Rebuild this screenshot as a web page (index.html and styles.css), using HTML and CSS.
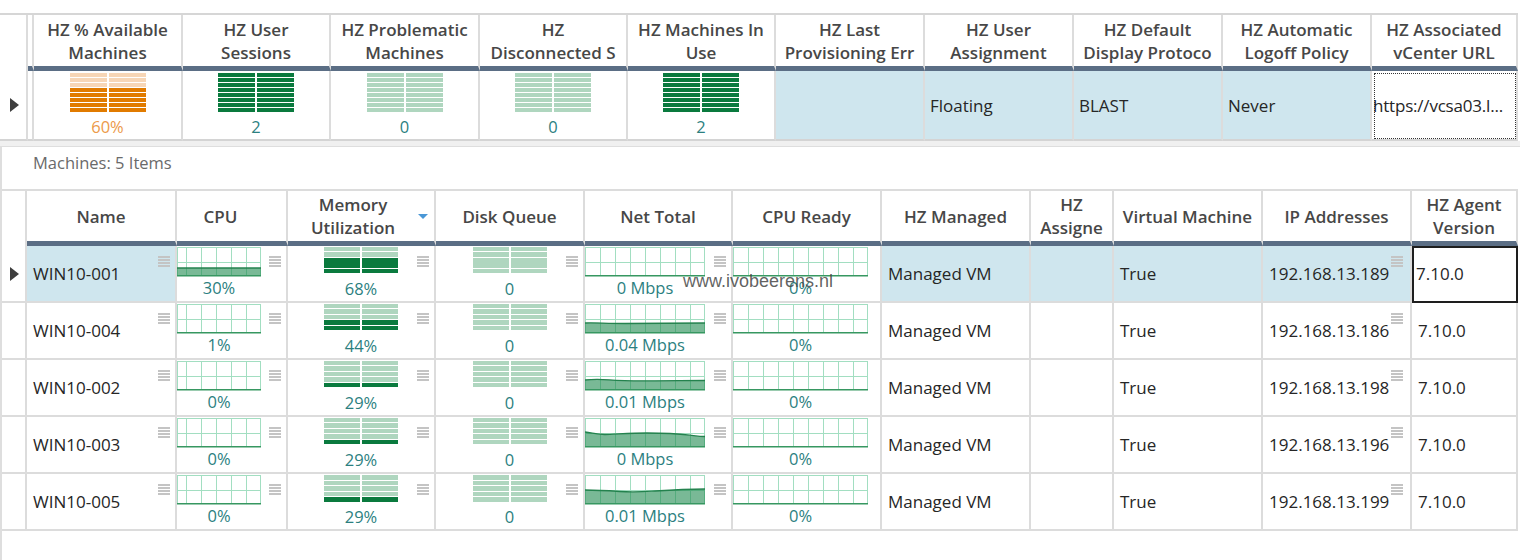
FILE: index.html
```html
<!DOCTYPE html>
<html>
<head>
<meta charset="utf-8">
<title>Horizon pool</title>
<link rel="stylesheet" href="styles.css">
</head>
<body>
<svg class="defs" width="0" height="0" aria-hidden="true">
  <symbol id="gcpu" viewBox="0 0 84 30"><path d="M0 .5H84M0 15.5H84M.5 0V28M9.5 0V28M24.5 0V28M39.5 0V28M54.5 0V28M69.5 0V28M83.5 0V28" stroke="#a2dec1" fill="none"/><path d="M0 28.75H84" stroke="#379761" stroke-width="1.5"/></symbol>
  <symbol id="gnet" viewBox="0 0 120 30"><path d="M0 .5H120M0 15.5H120M.5 0V28M15.5 0V28M30.5 0V28M45.5 0V28M60.5 0V28M75.5 0V28M90.5 0V28M105.5 0V28M119.5 0V28" stroke="#a2dec1" fill="none"/><path d="M0 28.75H120" stroke="#379761" stroke-width="1.5"/></symbol>
  <symbol id="grdy" viewBox="0 0 135 30"><path d="M0 .5H135M0 15.5H135M.5 0V28M15.5 0V28M30.5 0V28M45.5 0V28M60.5 0V28M75.5 0V28M90.5 0V28M105.5 0V28M120.5 0V28M134.5 0V28" stroke="#a2dec1" fill="none"/><path d="M0 28.75H135" stroke="#379761" stroke-width="1.5"/></symbol>
  <symbol id="hdl" viewBox="0 0 12 11"><path d="M0 1H12M0 4H12M0 7H12M0 10H12" stroke="#c4c4c4" stroke-width="2"/></symbol>
  <symbol id="tri" viewBox="0 0 9 14"><path d="M0 0L9 7L0 14Z" fill="#3e3e3e"/></symbol>
</svg>

<div class="page">
  <div class="pool">
    <div class="h rh"></div>
    <div class="h sp"></div>
    <div class="h">HZ % Available<br>Machines</div>
    <div class="h">HZ User<br>Sessions</div>
    <div class="h">HZ Problematic<br>Machines</div>
    <div class="h">HZ<br>Disconnected S</div>
    <div class="h">HZ Machines In<br>Use</div>
    <div class="h">HZ Last<br>Provisioning Err</div>
    <div class="h">HZ User<br>Assignment</div>
    <div class="h">HZ Default<br>Display Protoco</div>
    <div class="h">HZ Automatic<br>Logoff Policy</div>
    <div class="h">HZ Associated<br>vCenter URL</div>

    <div class="d rh"><svg class="tri"><use href="#tri"/></svg></div>
    <div class="d sp"></div>
    <div class="d stat"><div class="bar8 orange" style="--off:15px"></div><div class="val or">60%</div></div>
    <div class="d stat"><div class="bar8 green" style="--off:0px"></div><div class="val">2</div></div>
    <div class="d stat"><div class="bar8 green" style="--off:40px"></div><div class="val">0</div></div>
    <div class="d stat"><div class="bar8 green" style="--off:40px"></div><div class="val">0</div></div>
    <div class="d stat"><div class="bar8 green" style="--off:0px"></div><div class="val">2</div></div>
    <div class="d txt sel"></div>
    <div class="d txt sel">Floating</div>
    <div class="d txt sel">BLAST</div>
    <div class="d txt sel">Never</div>
    <div class="d txt url">https://vcsa03.l...</div>
  </div>

  <div class="band"></div>

  <div class="panel">
    <div class="label">Machines: 5 Items</div>
    <div class="machines">
      <div class="h rh"></div>
      <div class="h">Name</div>
      <div class="h cpuh">CPU</div>
      <div class="h sorted"><span class="ht">Memory<br>Utilization</span><svg class="sort" width="10" height="5" viewBox="0 0 10 5"><path d="M0 0H10L5 5Z" fill="#4a97d6"/></svg></div>
      <div class="h">Disk Queue</div>
      <div class="h">Net Total</div>
      <div class="h">CPU Ready</div>
      <div class="h">HZ Managed</div>
      <div class="h">HZ<br>Assigne</div>
      <div class="h">Virtual Machine</div>
      <div class="h">IP Addresses</div>
      <div class="h">HZ Agent<br>Version</div>

      <!-- row 1 -->
      <div class="r rh"><svg class="tri"><use href="#tri"/></svg></div>
      <div class="r txt sel"><span>WIN10-001</span><svg class="hdl"><use href="#hdl"/></svg></div>
      <div class="r chartcell"><div class="chart"><svg class="spark" width="84" height="30"><use href="#gcpu" width="84" height="30"/><path d="M0 28V21H84V28Z" class="fill"/><path d="M0 21H84" class="edge"/></svg><div class="val">30%</div></div><svg class="hdl"><use href="#hdl"/></svg></div>
      <div class="r barcell"><div class="bb"><div class="bar5" style="--off:11px"></div><div class="val">68%</div></div><svg class="hdl"><use href="#hdl"/></svg></div>
      <div class="r barcell"><div class="bb"><div class="bar5" style="--off:28px"></div><div class="val">0</div></div><svg class="hdl"><use href="#hdl"/></svg></div>
      <div class="r chartcell"><div class="chart"><svg class="spark" width="120" height="30"><use href="#gnet" width="120" height="30"/></svg><div class="val">0 Mbps</div></div><svg class="hdl"><use href="#hdl"/></svg></div>
      <div class="r chartcell"><div class="chart"><svg class="spark" width="135" height="30"><use href="#grdy" width="135" height="30"/></svg><div class="val">0%</div></div></div>
      <div class="r txt sel">Managed VM</div>
      <div class="r txt sel"></div>
      <div class="r txt sel">True</div>
      <div class="r txt sel ip"><span>192.168.13.189</span><svg class="hdl"><use href="#hdl"/></svg></div>
      <div class="r txt focus">7.10.0</div>

      <!-- row 2 -->
      <div class="r rh"></div>
      <div class="r txt"><span>WIN10-004</span><svg class="hdl"><use href="#hdl"/></svg></div>
      <div class="r chartcell"><div class="chart"><svg class="spark" width="84" height="30"><use href="#gcpu" width="84" height="30"/></svg><div class="val">1%</div></div><svg class="hdl"><use href="#hdl"/></svg></div>
      <div class="r barcell"><div class="bb"><div class="bar5" style="--off:16.5px"></div><div class="val">44%</div></div><svg class="hdl"><use href="#hdl"/></svg></div>
      <div class="r barcell"><div class="bb"><div class="bar5" style="--off:28px"></div><div class="val">0</div></div><svg class="hdl"><use href="#hdl"/></svg></div>
      <div class="r chartcell"><div class="chart"><svg class="spark" width="120" height="30"><use href="#gnet" width="120" height="30"/><path d="M0 28V19C10 18.5 20 19.5 40 19.5S80 19 120 19V28Z" class="fill"/><path d="M0 19C10 18.5 20 19.5 40 19.5S80 19 120 19" class="edge"/></svg><div class="val">0.04 Mbps</div></div><svg class="hdl"><use href="#hdl"/></svg></div>
      <div class="r chartcell"><div class="chart"><svg class="spark" width="135" height="30"><use href="#grdy" width="135" height="30"/></svg><div class="val">0%</div></div></div>
      <div class="r txt">Managed VM</div>
      <div class="r txt"></div>
      <div class="r txt">True</div>
      <div class="r txt ip"><span>192.168.13.186</span><svg class="hdl"><use href="#hdl"/></svg></div>
      <div class="r txt">7.10.0</div>

      <!-- row 3 -->
      <div class="r rh"></div>
      <div class="r txt"><span>WIN10-002</span><svg class="hdl"><use href="#hdl"/></svg></div>
      <div class="r chartcell"><div class="chart"><svg class="spark" width="84" height="30"><use href="#gcpu" width="84" height="30"/></svg><div class="val">0%</div></div><svg class="hdl"><use href="#hdl"/></svg></div>
      <div class="r barcell"><div class="bb"><div class="bar5" style="--off:22px"></div><div class="val">29%</div></div><svg class="hdl"><use href="#hdl"/></svg></div>
      <div class="r barcell"><div class="bb"><div class="bar5" style="--off:28px"></div><div class="val">0</div></div><svg class="hdl"><use href="#hdl"/></svg></div>
      <div class="r chartcell"><div class="chart"><svg class="spark" width="120" height="30"><use href="#gnet" width="120" height="30"/><path d="M0 28V19C8 18 14 18 24 18.8S50 20 70 19.8S100 19.5 120 19.5V28Z" class="fill"/><path d="M0 19C8 18 14 18 24 18.8S50 20 70 19.8S100 19.5 120 19.5" class="edge"/></svg><div class="val">0.01 Mbps</div></div><svg class="hdl"><use href="#hdl"/></svg></div>
      <div class="r chartcell"><div class="chart"><svg class="spark" width="135" height="30"><use href="#grdy" width="135" height="30"/></svg><div class="val">0%</div></div></div>
      <div class="r txt">Managed VM</div>
      <div class="r txt"></div>
      <div class="r txt">True</div>
      <div class="r txt ip"><span>192.168.13.198</span><svg class="hdl"><use href="#hdl"/></svg></div>
      <div class="r txt">7.10.0</div>

      <!-- row 4 -->
      <div class="r rh"></div>
      <div class="r txt"><span>WIN10-003</span><svg class="hdl"><use href="#hdl"/></svg></div>
      <div class="r chartcell"><div class="chart"><svg class="spark" width="84" height="30"><use href="#gcpu" width="84" height="30"/></svg><div class="val">0%</div></div><svg class="hdl"><use href="#hdl"/></svg></div>
      <div class="r barcell"><div class="bb"><div class="bar5" style="--off:22px"></div><div class="val">29%</div></div><svg class="hdl"><use href="#hdl"/></svg></div>
      <div class="r barcell"><div class="bb"><div class="bar5" style="--off:28px"></div><div class="val">0</div></div><svg class="hdl"><use href="#hdl"/></svg></div>
      <div class="r chartcell"><div class="chart"><svg class="spark" width="120" height="30"><use href="#gnet" width="120" height="30"/><path d="M0 28V14C8 15 12 16.5 20 16.5S45 15 62 15S95 16 105 17.2S115 18.5 120 18.5V28Z" class="fill"/><path d="M0 14C8 15 12 16.5 20 16.5S45 15 62 15S95 16 105 17.2S115 18.5 120 18.5" class="edge"/></svg><div class="val">0 Mbps</div></div><svg class="hdl"><use href="#hdl"/></svg></div>
      <div class="r chartcell"><div class="chart"><svg class="spark" width="135" height="30"><use href="#grdy" width="135" height="30"/></svg><div class="val">0%</div></div></div>
      <div class="r txt">Managed VM</div>
      <div class="r txt"></div>
      <div class="r txt">True</div>
      <div class="r txt ip"><span>192.168.13.196</span><svg class="hdl"><use href="#hdl"/></svg></div>
      <div class="r txt">7.10.0</div>

      <!-- row 5 -->
      <div class="r rh"></div>
      <div class="r txt"><span>WIN10-005</span><svg class="hdl"><use href="#hdl"/></svg></div>
      <div class="r chartcell"><div class="chart"><svg class="spark" width="84" height="30"><use href="#gcpu" width="84" height="30"/></svg><div class="val">0%</div></div><svg class="hdl"><use href="#hdl"/></svg></div>
      <div class="r barcell"><div class="bb"><div class="bar5" style="--off:22px"></div><div class="val">29%</div></div><svg class="hdl"><use href="#hdl"/></svg></div>
      <div class="r barcell"><div class="bb"><div class="bar5" style="--off:28px"></div><div class="val">0</div></div><svg class="hdl"><use href="#hdl"/></svg></div>
      <div class="r chartcell"><div class="chart"><svg class="spark" width="120" height="30"><use href="#gnet" width="120" height="30"/><path d="M0 28V15C10 15 20 15.5 35 16.5S55 17 70 16S100 14 120 14V28Z" class="fill"/><path d="M0 15C10 15 20 15.5 35 16.5S55 17 70 16S100 14 120 14" class="edge"/></svg><div class="val">0.01 Mbps</div></div><svg class="hdl"><use href="#hdl"/></svg></div>
      <div class="r chartcell"><div class="chart"><svg class="spark" width="135" height="30"><use href="#grdy" width="135" height="30"/></svg><div class="val">0%</div></div></div>
      <div class="r txt">Managed VM</div>
      <div class="r txt"></div>
      <div class="r txt">True</div>
      <div class="r txt ip"><span>192.168.13.199</span><svg class="hdl"><use href="#hdl"/></svg></div>
      <div class="r txt">7.10.0</div>
    </div>
  </div>
</div>

<div class="watermark">www.ivobeerens.nl</div>
</body>
</html>
```

FILE: styles.css
```css
* { box-sizing: border-box; }
html, body { margin: 0; padding: 0; background: #fff; }
body {
  width: 1520px;
  height: 560px;
  overflow: hidden;
  position: relative;
  font-family: "Open Sans", "Noto Sans", sans-serif;
  color: #262626;
}
.defs { position: absolute; width: 0; height: 0; overflow: hidden; }

.page { padding-top: 13px; }

/* ---------- top pool grid ---------- */
.pool {
  display: grid;
  grid-template-columns: 28px 6px 149px 148px 149px 148px 148px 149px 149px 149px 149px 146px;
  width: 1518px;
  border-top: 2px solid #d6d6d6;
}

.h {
  height: 56px;
  border-right: 2px solid #dcdcdc;
  border-bottom: 5px solid #5b6e85;
  display: flex;
  align-items: center;
  justify-content: center;
  text-align: center;
  font-weight: 600;
  font-size: 17px;
  line-height: 23px;
  color: #474747;
  white-space: nowrap;
  overflow: hidden;
}
.h.rh { border-bottom: 0; }

.d {
  height: 70px;
  border-right: 2px solid #dcdcdc;
  border-bottom: 2px solid #d4d4d4;
}
.rh { display: flex; align-items: center; justify-content: center; }
.tri { width: 9px; height: 14px; display: block; margin-left: 2px; }

.stat {
  display: flex;
  flex-direction: column;
  align-items: center;
  padding-top: 2px;
}
.bar8 {
  width: 76px;
  height: 39px;
  background:
    linear-gradient(to right, transparent 37px, #fff 37px 39px, transparent 39px),
    repeating-linear-gradient(to bottom, transparent 0 4px, #fff 4px 5px),
    linear-gradient(to bottom, var(--lt) 0 var(--off), var(--dk) var(--off) 100%);
}
.bar8.orange { --lt: #f7d6b6; --dk: #e17b00; }
.bar8.green { --lt: #afd6bf; --dk: #0a7a3e; }

.val {
  font-size: 16.5px;
  line-height: 22px;
  color: #2c7f7f;
  text-align: center;
  white-space: nowrap;
}
.stat .val { margin-top: 4px; }
.val.or { color: #ec9a4a; }

.txt {
  display: flex;
  align-items: center;
  padding-left: 5px;
  font-size: 17px;
  white-space: nowrap;
  overflow: hidden;
}
.sel { background: #cfe6ee; }
.url {
  padding-left: 1px;
  outline: 1px dotted #333;
  outline-offset: -3px;
  letter-spacing: -0.2px;
}

/* ---------- between ---------- */
.band { height: 5px; background: #f0f0f0; }

.panel {
  border-top: 1px solid #dedede;
  border-left: 2px solid #dedede;
  height: 420px;
}
.label {
  height: 42px;
  padding: 6px 0 0 31px;
  font-size: 16.5px;
  line-height: 20px;
  color: #6a6a6a;
}

/* ---------- machines grid ---------- */
.machines {
  display: grid;
  grid-template-columns: 25px 150px 111px 148px 149px 148px 149px 149px 83px 149px 149px 106px;
  width: 1516px;
  border-top: 2px solid #dcdcdc;
}
.machines .h { height: 55px; }
.cpuh { padding-right: 22px; }
.sorted { justify-content: flex-start; }
.sorted .ht { flex: 1; text-align: center; }
.sort { margin: 0 6px 0 0; display: block; }

.r {
  height: 57px;
  border-right: 2px solid #dcdcdc;
  border-bottom: 2px solid #dcdcdc;
}
.r.txt { padding-left: 6px; }
.hdl {
  width: 12px;
  height: 11px;
  display: block;
  flex: none;
  margin-left: auto;
  margin-right: 5px;
  align-self: flex-start;
  margin-top: 10px;
}
.ip .hdl { margin-right: 6px; margin-left: 2px; }
.r.focus {
  outline: 2px solid #1e1e1e;
  outline-offset: -2px;
  border-right-color: #1e1e1e;
  border-bottom-color: #1e1e1e;
  padding-left: 4px;
}

.chartcell { display: flex; align-items: flex-start; }
.chart { margin-top: 1px; display: flex; flex-direction: column; align-items: center; }
.spark { display: block; }
.fill { fill: #1f8a50; fill-opacity: .6; }
.edge { fill: none; stroke: #24824e; stroke-width: 1.3; }

.barcell {
  display: grid;
  grid-template-columns: 1fr auto 1fr;
  align-items: start;
}
.bb { grid-column: 2; grid-row: 1; display: flex; flex-direction: column; align-items: center; padding-top: 1px; }
.barcell .hdl { grid-column: 3; grid-row: 1; justify-self: end; }
.bar5 {
  width: 74px;
  height: 27px;
  background:
    linear-gradient(to right, transparent 36px, #fff 36px 38px, transparent 38px),
    repeating-linear-gradient(to bottom, transparent 0 4.5px, #fff 4.5px 5.5px),
    linear-gradient(to bottom, #afd6bf 0 var(--off), #0a7a3e var(--off) 100%);
}
.bb .val { margin-top: 4px; }

/* ---------- watermark ---------- */
.watermark {
  position: absolute;
  left: 683px;
  top: 270px;
  font-family: "Liberation Sans", Arial, sans-serif;
  font-size: 18px;
  line-height: 22px;
  color: rgba(70, 70, 70, 0.85);
}
```
